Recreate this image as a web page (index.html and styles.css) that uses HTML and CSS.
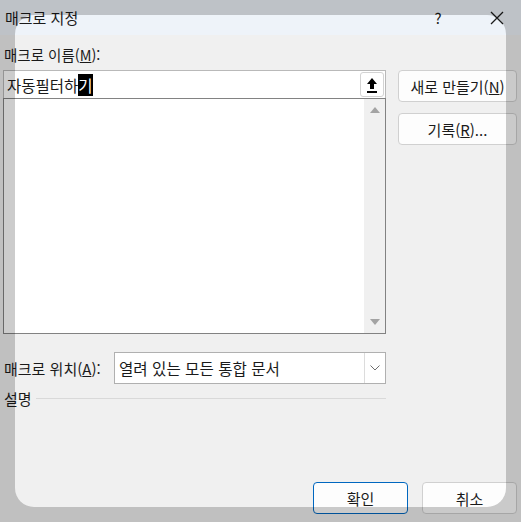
FILE: index.html
```html
<!DOCTYPE html>
<html lang="ko">
<head>
<meta charset="utf-8">
<title>매크로 지정</title>
<link rel="stylesheet" href="styles.css">
</head>
<body>
<div class="dialog">
  <div class="titlebar">
    <span class="title">매크로 지정</span>
    <span class="tb-help">?</span>
    <span class="tb-close">
      <svg width="14" height="14" viewBox="0 0 14 14"><path d="M1 1 L13 13 M13 1 L1 13" stroke="#1b1b1b" stroke-width="1.3" fill="none"/></svg>
    </span>
  </div>
  <div class="body">
    <div class="main">
      <div class="left">
        <div class="label">매크로 이름(<u>M</u>):</div>
        <div class="namebox">
          <span class="nametext">자동필터하<span class="sel">기</span></span>
          <span class="upbtn">
            <svg width="12" height="16" viewBox="0 0 12 16"><path d="M6 1 L11 7 L8 7 L8 12 L4 12 L4 7 L1 7 Z" fill="#000"/><rect x="1" y="14" width="10" height="2" fill="#000"/></svg>
          </span>
        </div>
        <div class="listbox">
          <div class="listarea"></div>
          <div class="scrollbar">
            <svg width="10" height="6" viewBox="0 0 10 6"><path d="M0 6 L5 0 L10 6 Z" fill="#a3a3a3"/></svg>
            <svg width="10" height="6" viewBox="0 0 10 6"><path d="M0 0 L10 0 L5 6 Z" fill="#a3a3a3"/></svg>
          </div>
        </div>
        <div class="locrow">
          <span class="loclabel">매크로 위치(<u>A</u>):</span>
          <div class="combo">
            <span class="combotext">열려 있는 모든 통합 문서</span>
            <span class="combobtn">
              <svg width="10" height="6" viewBox="0 0 10 6"><path d="M0.5 0.5 L5 5 L9.5 0.5" stroke="#6e6e6e" stroke-width="1" fill="none"/></svg>
            </span>
          </div>
        </div>
        <div class="descrow">
          <span class="desclabel">설명</span>
          <span class="descline"></span>
        </div>
      </div>
      <div class="right">
        <button class="btn">새로 만들기(<u>N</u>)</button>
        <button class="btn">기록(<u>R</u>)...</button>
      </div>
    </div>
    <div class="footer">
      <button class="btn btn-foot btn-primary">확인</button>
      <button class="btn btn-foot">취소</button>
    </div>
  </div>
  <div class="overlay"></div>
</div>
</body>
</html>
```

FILE: styles.css
```css
* { box-sizing: border-box; }
html, body { margin: 0; padding: 0; }
body {
  width: 521px;
  height: 522px;
  overflow: hidden;
  background: #f0f0f0;
  font-family: "Noto Sans CJK KR", "Noto Sans", sans-serif;
  font-size: 15px;
  color: #1a1a1a;
}
.dialog {
  position: relative;
  width: 521px;
  height: 522px;
  display: flex;
  flex-direction: column;
  overflow: hidden;
}
.titlebar {
  height: 35px;
  background: #eef3f9;
  display: flex;
  align-items: center;
  padding-left: 5px;
  flex: none;
}
.title { font-size: 15px; flex: 1; line-height: 20px; }
.tb-help { width: 20px; text-align: center; margin-right: 42px; font-size: 15px; }
.tb-close { width: 14px; height: 14px; margin-right: 17px; display: flex; }
.body {
  flex: 1;
  display: flex;
  flex-direction: column;
  padding: 10px 4px 8px 3px;
}
.main { display: flex; }
.left { width: 383px; display: flex; flex-direction: column; }
.right {
  margin-left: 12px;
  width: 119px;
  padding-top: 25px;
  display: flex;
  flex-direction: column;
  gap: 11px;
}
.label { height: 20px; line-height: 20px; padding-left: 1px; margin-bottom: 5px; font-size: 14.5px; }
.namebox {
  height: 28px;
  background: #fff;
  border: 1px solid #b9b9b9;
  border-bottom: none;
  display: flex;
  align-items: center;
  padding: 0 1px 0 3px;
}
.nametext { flex: 1; font-size: 15.5px; line-height: 20px; }
.sel { background: #000; color: #fff; }
.upbtn {
  width: 24px;
  height: 25px;
  border: 1px solid #d3d3d3;
  border-radius: 3px;
  background: #fff;
  display: flex;
  align-items: center;
  justify-content: center;
}
.listbox {
  height: 236px;
  border: 1px solid #828282;
  background: #fff;
  display: flex;
}
.listarea { flex: 1; }
.scrollbar {
  width: 21px;
  background: #f0f0f0;
  display: flex;
  flex-direction: column;
  align-items: center;
  justify-content: space-between;
  padding: 8px 0 8px;
}
.locrow { display: flex; align-items: center; margin-top: 18px; }
.loclabel { width: 111px; padding-left: 1px; }
.combo {
  flex: 1;
  height: 32px;
  background: #fff;
  border: 1px solid #b0b0b0;
  display: flex;
  align-items: center;
  padding-left: 4px;
}
.combotext { flex: 1; font-size: 15.6px; }
.combobtn {
  width: 21px;
  height: 30px;
  border-left: 1px solid #dcdcdc;
  display: flex;
  align-items: center;
  justify-content: center;
}
.descrow { display: flex; align-items: center; margin-top: 4px; height: 20px; }
.desclabel { padding-left: 1px; width: 33px; }
.descline { flex: 1; height: 1px; background: #d9d9d9; }
.btn {
  font-family: inherit;
  font-size: 15px;
  color: #1a1a1a;
  height: 32px;
  background: #fdfdfd;
  border: 1px solid #d0d0d0;
  border-radius: 4px;
  padding: 0;
  cursor: default;
}
.footer {
  margin-top: auto;
  display: flex;
  justify-content: flex-end;
  gap: 14px;
}
.btn-foot { width: 95px; height: 32px; }
.btn-primary { border: 1px solid #0067c0; }
.overlay {
  position: absolute;
  left: 15px;
  top: 15px;
  width: 491px;
  height: 492px;
  border-radius: 19px;
  box-shadow: 0 0 0 700px rgba(0, 0, 0, 0.2);
  pointer-events: none;
}
```
